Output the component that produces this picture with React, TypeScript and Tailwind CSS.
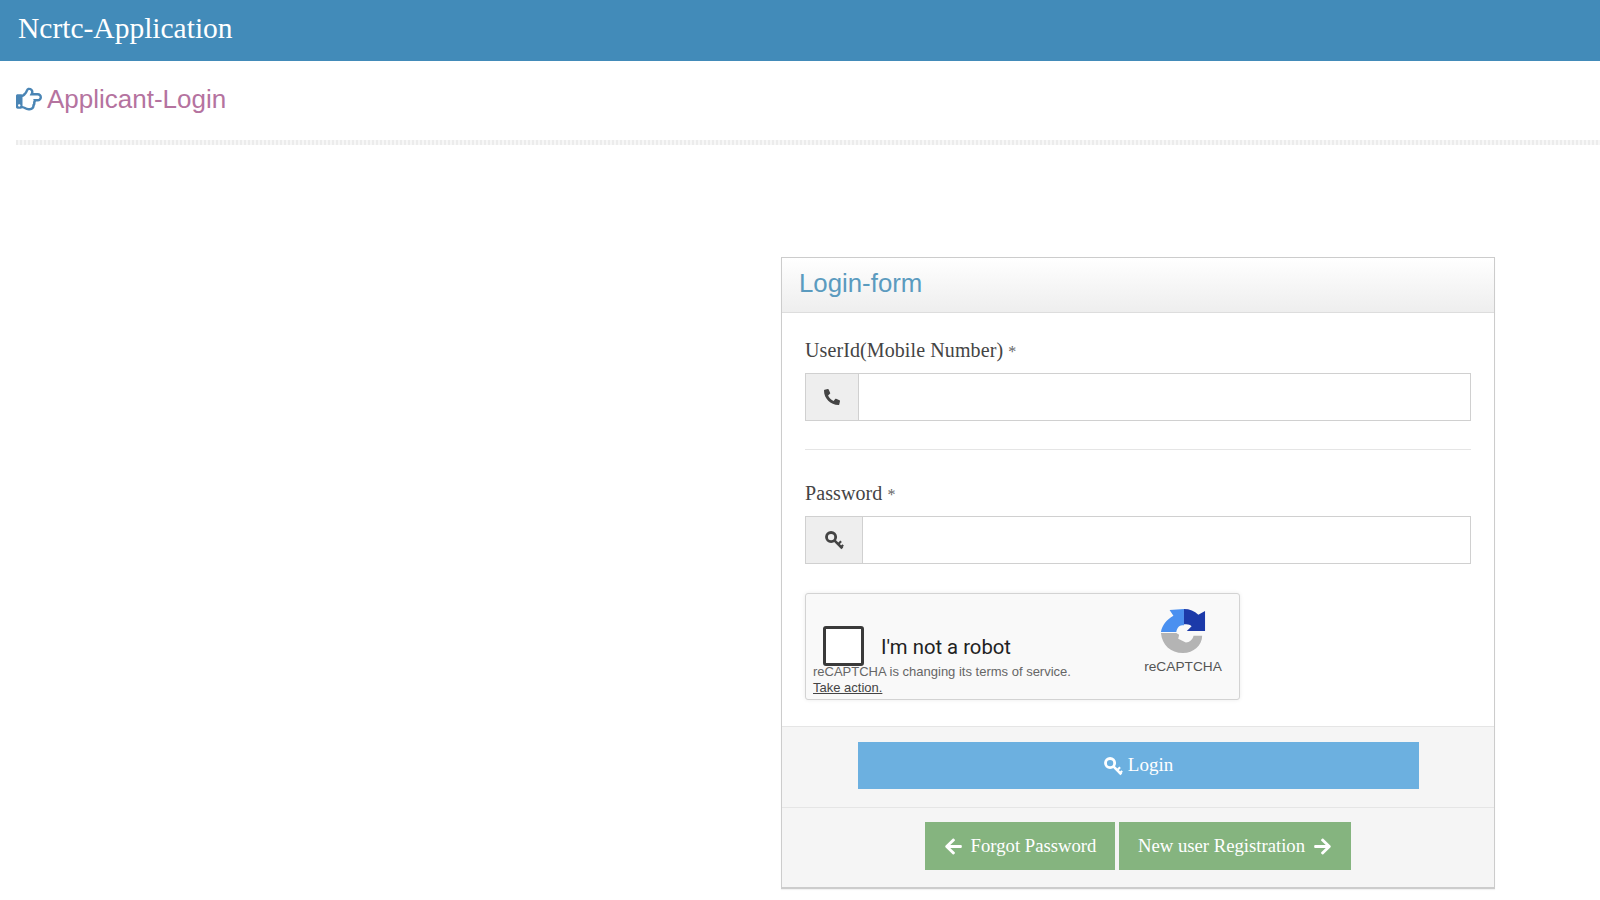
import { FaArrowLeft, FaArrowRight, FaPhone, FaRegHandPointRight } from "react-icons/fa";

function KeyIcon({ className }: { className?: string }) {
  return (
    <svg viewBox="0 0 24 24" fill="none" stroke="currentColor" className={className}>
      <circle cx="8.5" cy="8.5" r="5.5" strokeWidth="3.4" />
      <path d="M12.5 12.5 L22 22" strokeWidth="3.2" />
      <path d="M17 17 L20.5 13.5 M20.5 20.5 L23 18" strokeWidth="2.6" />
    </svg>
  );
}

function RecaptchaLogo() {
  return (
    <svg viewBox="0 0 48 48" className="w-[46px] h-[46px]">
      <path d="M25 1 L10 2 L14 8 C7 12 2 18 1 25 L17 25 C18 20 20 18 25 18 Z" fill="#4a90f0" />
      <path d="M25 1 C31 1 36 3 40 7 L47 3 L47 24 L28 24 L33 19 C31 17 28 17 25 17 Z" fill="#1c3aa9" />
      <path d="M1 26 L17 26 L20 28 L19 32 L27 36 C31 36 34 33 35 29 L44 29 C44 39 35 47 24 47 C11 47 2 38 1 26 Z" fill="#b4b4b4" />
    </svg>
  );
}

function InputGroup({ icon, addonWidth }: { icon: React.ReactNode; addonWidth: string }) {
  return (
    <div className="flex h-[48px] border border-[#d0d0d0]">
      <span className={`flex items-center justify-center bg-[#eee] border-r border-[#d0d0d0] text-[#444] ${addonWidth}`}>
        {icon}
      </span>
      <input className="flex-1 min-w-0 bg-white outline-none" />
    </div>
  );
}

function FieldLabel({ text, gap }: { text: string; gap: string }) {
  return (
    <label className={`block text-[20px] leading-[24px] tracking-[0.1px] text-[#444] ${gap}`}>
      {text} <span className="text-[16px] leading-none text-[#666]">*</span>
    </label>
  );
}

export default function App() {
  return (
    <div className="h-[900px] overflow-hidden bg-white font-['Liberation_Serif',serif] text-[#333]">
      <header className="h-[61px] bg-[#428bb9] flex items-center px-[18px]">
        <h1 className="text-white text-[29.5px] leading-none pb-1">Ncrtc-Application</h1>
      </header>

      <div className="pl-4 pt-[19px]">
        <div className="flex items-center gap-[5px] h-[38px] font-['Liberation_Sans',sans-serif]">
          <FaRegHandPointRight className="text-[26px] text-[#4a85b5]" />
          <span className="text-[26px] text-[#b5739f]">Applicant-Login</span>
        </div>
        <div className="mt-[22px] h-[5px] bg-[repeating-linear-gradient(90deg,#ececec_0_2px,#f7f7f7_2px_4px)]" />
      </div>

      <div className="flex justify-end pr-[105px] pt-[112px]">
        <div className="w-[714px] h-[632px] border border-[#ccc] border-b-2 shadow-[0_1px_1px_rgba(0,0,0,0.05)] flex flex-col">
          <div className="h-[55px] flex items-center px-[17px] pb-[4px] border-b border-[#ddd] bg-gradient-to-b from-white to-[#eee]">
            <h2 className="font-['Liberation_Sans',sans-serif] text-[25.8px] text-[#5b9bbf]">Login-form</h2>
          </div>

          <div className="flex-1 px-[23px] pt-[25px]">
            <FieldLabel text="UserId(Mobile Number)" gap="mb-[11px]" />
            <InputGroup icon={<FaPhone className="text-[16px] -scale-x-100" />} addonWidth="w-[53px]" />
            <hr className="mt-[28px] mb-[31px] border-[#e5e5e5]" />
            <FieldLabel text="Password" gap="mb-[11px]" />
            <InputGroup icon={<KeyIcon className="w-[20px] h-[20px]" />} addonWidth="w-[57px]" />

            <div className="relative mt-[29px] w-[435px] h-[107px] rounded-[3px] border border-[#d3d3d3] bg-[#f9f9f9] shadow-[0_0_4px_rgba(0,0,0,0.08)] font-['Roboto',sans-serif]">
              <div className="flex items-center pl-[17px] pt-[32px]">
                <span className="w-[41px] h-[40px] rounded-[3px] border-[3px] border-[#3a3a3a] bg-white" />
                <span className="ml-[17px] text-[20.3px] leading-[30px] mt-[1px] text-[#222]">I'm not a robot</span>
              </div>
              <div className="pl-[7px] -mt-[2px] text-[13px] leading-[16px] text-[#666] font-['Liberation_Sans',sans-serif]">
                <p>reCAPTCHA is changing its terms of service.</p>
                <a className="underline text-[#444]">Take action.</a>
              </div>
              <div className="absolute right-[16px] top-[14px] w-[80px] flex flex-col items-center font-['Liberation_Sans',sans-serif]">
                <RecaptchaLogo />
                <span className="mt-[3px] text-[13.7px] text-[#555]">reCAPTCHA</span>
              </div>
            </div>
          </div>

          <div className="h-[81px] flex items-start justify-center pt-[15px] bg-[#f5f5f5] border-t border-[#e5e5e5]">
            <button className="w-[561px] h-[47px] bg-[#6cb0e0] text-white text-[19px] flex items-center justify-center gap-[5px]">
              <KeyIcon className="w-[20px] h-[20px]" /> Login
            </button>
          </div>
          <div className="h-[80px] flex items-start justify-center pt-[14px] gap-1 bg-[#f5f5f5] border-t border-[#e5e5e5]">
            <button className="w-[190px] h-[48px] bg-[#85b47f] text-white text-[18.7px] flex items-center justify-center gap-2">
              <FaArrowLeft className="text-[19px]" /> Forgot Password
            </button>
            <button className="w-[232px] h-[48px] bg-[#85b47f] text-white text-[18.7px] flex items-center justify-center gap-2">
              New user Registration <FaArrowRight className="text-[19px]" />
            </button>
          </div>
        </div>
      </div>
    </div>
  );
}
